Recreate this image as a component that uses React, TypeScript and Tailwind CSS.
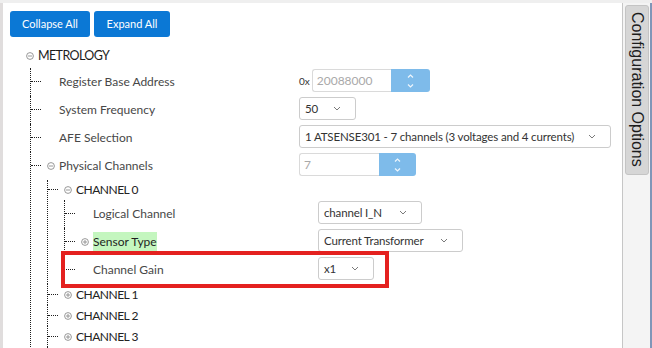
import React from 'react'

const dot = 'border-dotted border-[#1e1e1e]'

function Toggle({ open }: { open: boolean }) {
  return (
    <svg width="8" height="8" viewBox="0 0 8 8" className="flex-none">
      <circle cx="4" cy="4" r="3.4" fill="none" stroke="#8c8c8c" strokeWidth="0.9" />
      <path d="M2 4h4" stroke="#8c8c8c" strokeWidth="0.9" />
      {!open && <path d="M4 2v4" stroke="#8c8c8c" strokeWidth="0.9" />}
    </svg>
  )
}

function Chevron() {
  return (
    <svg width="8" height="5" viewBox="0 0 8 5" className="flex-none">
      <path d="M1 1l3 3 3-3" fill="none" stroke="#7a7a7a" strokeWidth="1" />
    </svg>
  )
}

function Select({ value, w }: { value: string; w: string }) {
  return (
    <div
      className={`mb-[3px] flex h-[23px] ${w} flex-none items-center justify-between rounded-[3px] border border-[#cccccc] bg-white pl-[5px] pr-[14px] text-[11.5px] text-[#333]`}
    >
      <span className="tracking-[-0.15px]">{value}</span>
      <Chevron />
    </div>
  )
}

function Spin({ w }: { w: string }) {
  return (
    <div className={`flex ${w} flex-none flex-col items-center justify-center gap-[6px] rounded-r-[3px] bg-[#7ebbea]`}>
      <svg width="7" height="4" viewBox="0 0 7 4">
        <path d="M1 3.5l2.5-2.5 2.5 2.5" fill="none" stroke="#eef6fd" strokeWidth="1.2" />
      </svg>
      <svg width="7" height="4" viewBox="0 0 7 4">
        <path d="M1 0.5l2.5 2.5 2.5-2.5" fill="none" stroke="#eef6fd" strokeWidth="1.2" />
      </svg>
    </div>
  )
}

function NumInput({ value, w, spin }: { value: string; w: string; spin: string }) {
  return (
    <div className="mb-[3px] flex h-[23px] flex-none">
      <div
        className={`${w} rounded-l-[3px] border border-r-0 border-[#dadada] pl-[4px] text-[12px] leading-[21px] text-[#a9a9a9]`}
      >
        {value}
      </div>
      <Spin w={spin} />
    </div>
  )
}

interface ItemProps {
  h: string
  last?: boolean
  toggle?: 'open' | 'closed'
  label: React.ReactNode
  labelW?: string
  control?: React.ReactNode
  upper?: boolean
  children?: React.ReactNode
}

function Item({ h, last, toggle, label, labelW, control, upper, children }: ItemProps) {
  return (
    <div className={last ? '' : `border-l ${dot}`}>
      <div className={`flex items-center ${h}`}>
        <div className={`flex-none self-stretch ${last ? 'w-[11px]' : 'w-[10px]'}`}>
          <div className={`h-1/2 border-b ${dot} ${last ? 'border-l' : ''}`} />
        </div>
        <div className="ml-[6px] flex w-[8px] flex-none items-center">
          {toggle && <Toggle open={toggle === 'open'} />}
        </div>
        <div
          className={`ml-[4px] flex-none whitespace-nowrap ${labelW ?? ''} ${
            upper ? 'text-[12px] tracking-[-0.5px] text-[#222]' : 'text-[12px] text-[#474747]'
          }`}
        >
          {label}
        </div>
        {control}
      </div>
      {children && <div className="ml-[16px]">{children}</div>}
    </div>
  )
}

export default function App() {
  return (
    <div className="relative flex h-[348px] w-[652px] overflow-hidden bg-[#efefef] pt-[3px] font-['Lato',sans-serif]">
      <main className="flex-1 overflow-hidden border-l-[3px] border-[#e0dddd] bg-white pl-[7px] pt-[8px]">
        <div className="flex gap-[4px]">
          <button className="h-[26px] w-[80px] rounded-[3px] bg-[#0b78d5] text-[11px] text-white">Collapse All</button>
          <button className="h-[26px] w-[76px] rounded-[3px] bg-[#0b78d5] text-[11px] text-white">Expand All</button>
        </div>

        <div className="ml-[16px] mt-[7px]">
          <div className="flex h-[24px] items-center">
            <Toggle open />
            <span className="ml-[4px] text-[12.5px] tracking-[-0.6px] text-[#1c1c1c]">METROLOGY</span>
          </div>
          <div className="ml-[4px]">
            <Item
              h="h-[28px]"
              label="Register Base Address"
              labelW="w-[240px]"
              control={
                <div className="flex items-center">
                  <span className="mr-[2px] mb-[2px] text-[10px] text-[#333]">0x</span>
                  <NumInput value="20088000" w="w-[79px]" spin="w-[39px]" />
                </div>
              }
            />
            <Item h="h-[28px]" label="System Frequency" labelW="w-[240px]" control={<Select value="50" w="w-[57px]" />} />
            <Item
              h="h-[28px]"
              label="AFE Selection"
              labelW="w-[240px]"
              control={<Select value="1 ATSENSE301 - 7 channels (3 voltages and 4 currents)" w="w-[312px]" />}
            />
            <Item
              h="h-[28px]"
              toggle="open"
              label="Physical Channels"
              labelW="w-[240px]"
              control={<NumInput value="7" w="w-[80px]" spin="w-[37px]" />}
            >
              <Item h="h-[20px]" toggle="open" upper label="CHANNEL 0">
                <Item
                  h="h-[28px]"
                  label="Logical Channel"
                  labelW="w-[225px]"
                  control={<Select value="channel I_N" w="w-[104px]" />}
                />
                <Item
                  h="h-[28px]"
                  toggle="closed"
                  label={<span className="bg-[#c4f6bf] py-[2px] text-[#1e1e1e]">Sensor Type</span>}
                  labelW="w-[225px]"
                  control={<Select value="Current Transformer" w="w-[145px]" />}
                />
                <Item
                  h="h-[28px]"
                  last
                  label="Channel Gain"
                  labelW="w-[225px]"
                  control={<Select value="x1" w="w-[56px]" />}
                />
              </Item>
              <Item h="h-[21px]" toggle="closed" upper label="CHANNEL 1" />
              <Item h="h-[21px]" toggle="closed" upper label="CHANNEL 2" />
              <Item h="h-[21px]" toggle="closed" upper label="CHANNEL 3" />
              <div className={`h-[20px] border-l ${dot}`} />
            </Item>
          </div>
        </div>
      </main>

      <aside className="w-[30px] flex-none border-l border-r-2 border-l-[#c6c6c6] border-r-[#8096b8] bg-[#f4f4f4] pl-[2px] pt-[2px]">
        <div className="flex h-[170px] w-[24px] justify-center rounded-[3px] border border-[#c4c4c4] bg-[#d6d6d6] pt-[6px]">
          <span className="font-['Liberation_Sans',sans-serif] text-[16px] leading-[22px] text-[#1c1c1c] [writing-mode:vertical-rl]">
            Configuration Options
          </span>
        </div>
      </aside>

      <div className="absolute left-[61px] top-[251px] h-[37px] w-[328px] border-[4px] border-[#e4211f]" />
    </div>
  )
}
